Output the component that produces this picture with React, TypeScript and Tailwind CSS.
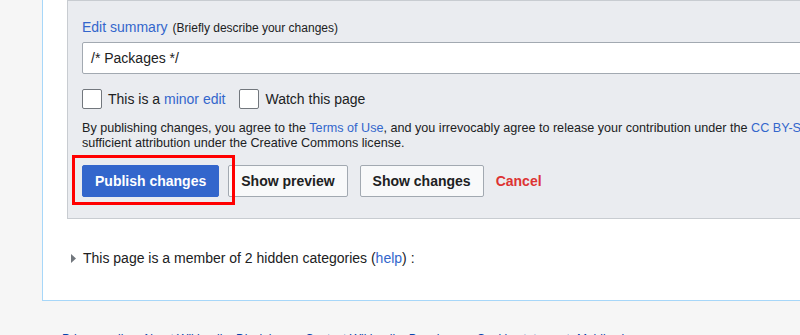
const font = { fontFamily: '"Liberation Sans", Arial, sans-serif' };

const footerLinks = [
  "Privacy policy",
  "About Wikipedia",
  "Disclaimers",
  "Contact Wikipedia",
  "Developers",
  "Cookie statement",
  "Mobile view",
];

function Checkbox({ children }: { children: React.ReactNode }) {
  return (
    <label className="flex items-center">
      <span className="w-[20px] h-[20px] bg-white border border-[#72777d] rounded-[2px]" />
      <span className="ml-[6px] text-[14px] leading-[20px] text-[#202122]">
        {children}
      </span>
    </label>
  );
}

function SecondaryButton({ label }: { label: string }) {
  return (
    <button className="h-[32px] px-[12px] border border-[#a2a9b1] rounded-[2px] bg-[#f8f9fa] text-[14px] font-bold text-[#202122]">
      {label}
    </button>
  );
}

export default function App() {
  return (
    <div
      className="w-[800px] h-[335px] overflow-hidden bg-[#f6f6f6] text-[#202122]"
      style={font}
    >
      <div className="ml-[42px] w-[900px] bg-white border-l border-b border-[#a7d7f9] pl-[24px] pb-[32px]">
        <div className="bg-[#eaecf0] border border-[#c8ccd1] pl-[14px] pt-[16px] pb-[21px]">
          <div className="h-[20px] flex items-baseline leading-[20px]">
            <a className="text-[14px] text-[#3366cc]">Edit summary</a>
            <span className="ml-[5px] text-[12px]">
              (Briefly describe your changes)
            </span>
          </div>
          <div className="mt-[5px] h-[32px] bg-white border border-[#a2a9b1] rounded-[2px] flex items-center pl-[8px] text-[14px]">
            /* Packages */
          </div>
          <div className="mt-[15px] flex items-center gap-[14px]">
            <Checkbox>
              This is a <a className="text-[#3366cc]">minor edit</a>
            </Checkbox>
            <Checkbox>Watch this page</Checkbox>
          </div>
          <p className="mt-[12px] text-[12.6px] leading-[15px] whitespace-nowrap">
            By publishing changes, you agree to the{" "}
            <a className="text-[#3366cc]">Terms of Use</a>, and you irrevocably
            agree to release your contribution under the{" "}
            <a className="text-[#3366cc]">CC BY-SA 3.0 License</a> and the{" "}
            <a className="text-[#3366cc]">GFDL</a>. You agree that a hyperlink
            or URL is
            <br />
            sufficient attribution under the Creative Commons license.
          </p>
          <div className="mt-[14px] flex items-center">
            <span className="relative flex">
              <button className="h-[32px] px-[12px] border border-[#3366cc] rounded-[2px] bg-[#3366cc] text-[14px] font-bold text-white">
                Publish changes
              </button>
              <span className="absolute -left-[10px] -top-[10px] w-[163px] h-[50px] border-[3px] border-[#ff0000]" />
            </span>
            <span className="ml-[9px] flex">
              <SecondaryButton label="Show preview" />
            </span>
            <span className="ml-[12px] flex">
              <SecondaryButton label="Show changes" />
            </span>
            <a className="ml-[12px] text-[14px] font-bold text-[#dd3333]">
              Cancel
            </a>
          </div>
        </div>
        <div className="mt-[29px] flex items-center h-[20px] text-[14px] leading-[20px]">
          <svg width="12" height="20" viewBox="0 0 12 20" className="ml-[3px]">
            <path d="M1 6 L6 10.5 L1 15 Z" fill="#72777d" />
          </svg>
          <span className="ml-[1px]">
            This page is a member of 2 hidden categories (
            <a className="text-[#3366cc]">help</a>) :
          </span>
        </div>
      </div>
      <ul className="mt-[31px] ml-[62px] flex gap-[7px] text-[12px] leading-[15px] whitespace-nowrap">
        {footerLinks.map((l) => (
          <li key={l} className="text-[#0645ad]">
            {l}
          </li>
        ))}
      </ul>
    </div>
  );
}
